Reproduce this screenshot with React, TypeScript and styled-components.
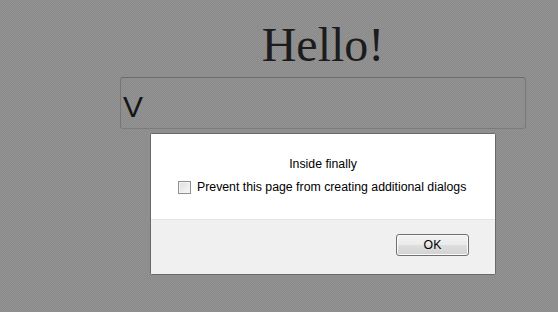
import React from "react";
import styled, { createGlobalStyle } from "styled-components";

const GlobalStyle = createGlobalStyle`
  html, body {
    margin: 0;
    padding: 0;
  }
  body {
    background-color: #8e8e8e;
    background-image: repeating-conic-gradient(#8b8b8b 0 25%, #929292 0 50%);
    background-size: 2px 2px;
    font-family: "Liberation Sans", Arial, sans-serif;
  }
`;

const Page = styled.div`
  position: relative;
  box-sizing: border-box;
  width: 558px;
  height: 312px;
  padding: 21px 0 0 120px;
  display: flex;
  flex-direction: column;
  align-items: flex-start;
`;

const Title = styled.h1`
  margin: 0;
  width: 406px;
  text-align: center;
  font-family: "Liberation Serif", "Times New Roman", serif;
  font-weight: normal;
  font-size: 48px;
  line-height: 48px;
  color: #1c1c1c;
`;

const Field = styled.div`
  box-sizing: border-box;
  margin-top: 8px;
  width: 406px;
  height: 52px;
  padding: 7px 0 0 2px;
  border: 1px solid;
  border-color: #6c6c6c #787878 #7b7b7b #777777;
  border-radius: 3px;
  font-family: "Liberation Sans", Arial, sans-serif;
  font-size: 30px;
  line-height: 43px;
  color: #161616;
`;

const Overlay = styled.div`
  position: absolute;
  inset: 0;
  box-sizing: border-box;
  padding: 133px 0 0 150px;
  display: flex;
  align-items: flex-start;
`;

const Dialog = styled.div`
  box-sizing: border-box;
  width: 346px;
  height: 142px;
  border: 1px solid #6a6a6a;
  border-radius: 2px;
  background: #ffffff;
  display: flex;
  flex-direction: column;
  overflow: hidden;
  font-family: "Liberation Sans", Arial, sans-serif;
  font-size: 12.3px;
  line-height: 15px;
  color: #000000;
`;

const DialogBody = styled.div`
  box-sizing: border-box;
  height: 85px;
  padding: 23px 0 0 27px;
  display: flex;
  flex-direction: column;
  background: #ffffff;
`;

const Message = styled.div`
  margin-left: -27px;
  text-align: center;
`;

const CheckRow = styled.label`
  margin-top: 8px;
  display: flex;
  align-items: center;
  gap: 6px;
`;

const Check = styled.input`
  appearance: none;
  margin: 0;
  box-sizing: border-box;
  width: 13px;
  height: 13px;
  border: 1px solid #8e8f8f;
  background: linear-gradient(135deg, #dcdcdc 0%, #eeeeee 60%, #f6f6f6 100%);
  box-shadow: inset 0 0 0 1px #f4f4f4;
`;

const Footer = styled.div`
  flex: 1;
  box-sizing: border-box;
  border-top: 1px solid #e4e4e4;
  background: #f0f0f0;
  display: flex;
  justify-content: flex-end;
  align-items: flex-start;
  padding: 14px 26px 0 0;
`;

const Button = styled.button`
  box-sizing: border-box;
  width: 73px;
  height: 22px;
  margin: 0;
  padding: 0;
  border: 1px solid #707070;
  border-radius: 3px;
  background: linear-gradient(#f3f3f3 0%, #ebebeb 48%, #dedede 52%, #d2d2d2 100%);
  box-shadow: inset 0 0 0 1px #fbfbfb;
  font-family: "Liberation Sans", Arial, sans-serif;
  font-size: 12.3px;
  line-height: 18px;
  color: #000000;
`;

export default function App() {
  return (
    <>
      <GlobalStyle />
      <Page>
        <Title>Hello!</Title>
        <Field>V</Field>
        <Overlay>
          <Dialog>
            <DialogBody>
              <Message>Inside finally</Message>
              <CheckRow>
                <Check type="checkbox" />
                <span>Prevent this page from creating additional dialogs</span>
              </CheckRow>
            </DialogBody>
            <Footer>
              <Button>OK</Button>
            </Footer>
          </Dialog>
        </Overlay>
      </Page>
    </>
  );
}
